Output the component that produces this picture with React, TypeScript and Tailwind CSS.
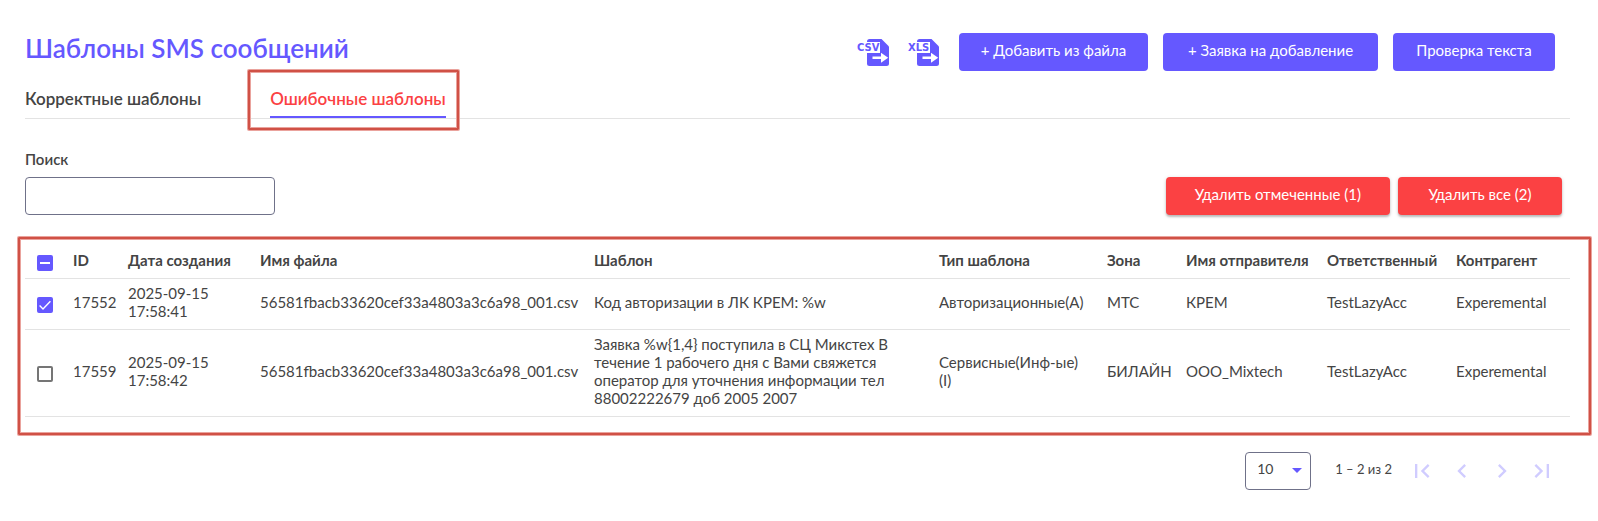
import { useState } from 'react'
import type { ReactNode } from 'react'

interface Template {
  id: number
  created: string
  file: string
  text: string
  type: string
  zone: string
  sender: string
  owner: string
  contractor: string
}

const TEMPLATES: Template[] = [
  {
    id: 17552,
    created: '2025-09-15 17:58:41',
    file: '56581fbacb33620cef33a4803a3c6a98_001.csv',
    text: 'Код авторизации в ЛК КРЕМ: %w',
    type: 'Авторизационные(A)',
    zone: 'МТС',
    sender: 'КРЕМ',
    owner: 'TestLazyAcc',
    contractor: 'Experemental',
  },
  {
    id: 17559,
    created: '2025-09-15 17:58:42',
    file: '56581fbacb33620cef33a4803a3c6a98_001.csv',
    text: 'Заявка %w{1,4} поступила в СЦ Микстех В течение 1 рабочего дня с Вами свяжется оператор для уточнения информации тел 88002222679 доб 2005 2007',
    type: 'Сервисные(Инф-ые) (I)',
    zone: 'БИЛАЙН',
    sender: 'ООО_Mixtech',
    owner: 'TestLazyAcc',
    contractor: 'Experemental',
  },
]

const COLUMNS = [
  { title: 'ID', width: 'w-[55px]' },
  { title: 'Дата создания', width: 'w-[132px]' },
  { title: 'Имя файла', width: 'w-[334px]' },
  { title: 'Шаблон', width: '' },
  { title: 'Тип шаблона', width: 'w-[168px]' },
  { title: 'Зона', width: 'w-[79px]' },
  { title: 'Имя отправителя', width: 'w-[141px]' },
  { title: 'Ответственный', width: 'w-[129px]' },
  { title: 'Контрагент', width: 'w-[124px]' },
]

const PAGER = [
  { label: 'Первая страница', d: 'M18.41 16.59L13.82 12l4.59-4.59L17 6l-6 6 6 6zM6 6h2v12H6z' },
  { label: 'Предыдущая страница', d: 'M15.41 7.41L14 6l-6 6 6 6 1.41-1.41L10.83 12z' },
  { label: 'Следующая страница', d: 'M10 6L8.59 7.41 13.17 12l-4.58 4.59L10 18l6-6z' },
  { label: 'Последняя страница', d: 'M5.59 7.41L10.18 12l-4.59 4.59L7 18l6-6-6-6zM16 6h2v12h-2z' },
]

function ExportButton({ format, textX }: { format: string; textX: number }) {
  return (
    <button type="button" aria-label={`Экспорт ${format}`} className="cursor-pointer">
      <svg width="32" height="28" viewBox="0 0 32 28" className="block">
        <path d="M12.5 0H24.5L32 7.5V24.5Q32 27 29.5 27H12.5Q10 27 10 24.5V2.5Q10 0 12.5 0Z" fill="#6558ff" />
        <path d="M8 3H23V14H8Z" fill="#fff" />
        <path d="M15.5 17.5H24V13.8L31.2 18.8L24 23.8V20.1H15.5Z" fill="#fff" />
        <text x={textX} y="12" fill="#6558ff" fontSize="10" fontWeight="700" fontFamily="DejaVu Sans, sans-serif">{format}</text>
      </svg>
    </button>
  )
}

function PrimaryButton({ width, children }: { width: string; children: ReactNode }) {
  return (
    <button type="button" className={`h-[38px] px-4 pb-1 rounded bg-[#6558ff] text-white whitespace-nowrap cursor-pointer hover:bg-[#5548ef] ${width}`}>
      {children}
    </button>
  )
}

function DangerButton({ children }: { children: ReactNode }) {
  return (
    <button type="button" className="h-[38px] min-w-[164px] px-[29px] pb-1 rounded bg-[#fb4143] text-white whitespace-nowrap shadow-[0_2px_2px_rgba(0,0,0,0.2),0_1px_4px_rgba(0,0,0,0.14)] cursor-pointer hover:bg-[#e93335]">
      {children}
    </button>
  )
}

function Checkbox({ label, checked, mixed, onChange }: { label: string; checked: boolean; mixed?: boolean; onChange: () => void }) {
  return (
    <span className="relative block size-4">
      <input
        type="checkbox"
        aria-label={label}
        checked={checked || !!mixed}
        onChange={onChange}
        className="block size-4 appearance-none rounded-xs border-2 border-[#757575] checked:border-[#6558ff] checked:bg-[#6558ff] cursor-pointer"
      />
      {(checked || mixed) && (
        <svg viewBox="0 0 16 16" className="absolute inset-0 size-4 pointer-events-none" fill="none" stroke="#fff">
          {mixed ? <path d="M3 8H13" strokeWidth="2" /> : <path d="M2.6 8.6L6 12L13.4 4.2" strokeWidth="1.4" />}
        </svg>
      )}
    </span>
  )
}

// red frame around the part of the page the reader should look at
function Highlight({ className }: { className: string }) {
  return (
    <span
      aria-hidden="true"
      className={`absolute pointer-events-none border-2 border-[#d05146] rounded-[1px] shadow-[0_0_0_1px_#eaa39d,inset_0_0_0_1px_#eaa39d] ${className}`}
    />
  )
}

export default function App() {
  const [selected, setSelected] = useState<number[]>([17552])
  const [search, setSearch] = useState('')
  const all = selected.length === TEMPLATES.length

  function toggle(id: number) {
    setSelected(s => (s.includes(id) ? s.filter(x => x !== id) : [...s, id]))
  }

  return (
    <main className="bg-white pl-[25px] pr-7 pt-[33px] pb-7 font-[Lato,'Open_Sans',sans-serif] text-[15px] leading-[18px] text-[#444]">
      {/* Title and actions */}
      <header className="flex items-start justify-between pr-[15px]">
        <h1 className="text-[26px] leading-[30px] font-semibold text-[#6558ff]">Шаблоны SMS сообщений</h1>
        <div className="flex items-center gap-[15px]">
          <div className="flex gap-[18px] pr-[5px] pt-0.5">
            <ExportButton format="CSV" textX={0} />
            <ExportButton format="XLS" textX={1} />
          </div>
          <PrimaryButton width="min-w-[189px]">+ Добавить из файла</PrimaryButton>
          <PrimaryButton width="min-w-[215px]">+ Заявка на добавление</PrimaryButton>
          <PrimaryButton width="min-w-[162px]">Проверка текста</PrimaryButton>
        </div>
      </header>

      {/* Tabs */}
      <nav className="flex gap-[69px] pt-[18px] border-b border-[#e3e3e3] text-[17px] leading-5 font-semibold">
        <a href="#correct" className="pb-[7px] border-b-2 border-transparent">Корректные шаблоны</a>
        <a href="#errors" className="relative pb-[7px] border-b-2 border-[#6558ff] text-[#fb4143]">
          Ошибочные шаблоны
          <Highlight className="-left-[22px] -right-[13px] -top-[19px] -bottom-[14px]" />
        </a>
      </nav>

      {/* Search and bulk delete */}
      <div className="flex items-end justify-between pt-[31px] pb-[29px] pr-2">
        <div className="flex flex-col gap-[9px]">
          <label htmlFor="search" className="font-semibold">Поиск</label>
          <input
            id="search"
            value={search}
            onChange={e => setSearch(e.target.value)}
            className="w-[250px] h-[38px] px-3 rounded border border-[#6f7189] outline-none focus:border-[#6558ff]"
          />
        </div>
        <div className="flex gap-2">
          <DangerButton>Удалить отмеченные ({selected.length})</DangerButton>
          <DangerButton>Удалить все ({TEMPLATES.length})</DangerButton>
        </div>
      </div>

      {/* Templates */}
      <section className="relative">
        <table className="w-full table-fixed border-separate border-spacing-0 text-left">
          <thead>
            <tr>
              <th className="w-[38px] h-[35px] pl-3 pt-1 border-b border-[#e3e3e3]">
                <Checkbox
                  label="Выбрать все"
                  checked={all}
                  mixed={selected.length > 0 && !all}
                  onChange={() => setSelected(all ? [] : TEMPLATES.map(t => t.id))}
                />
              </th>
              {COLUMNS.map(c => (
                <th key={c.title} className={`px-[10px] pb-0.5 border-b border-[#e3e3e3] font-bold whitespace-nowrap ${c.width}`}>{c.title}</th>
              ))}
            </tr>
          </thead>
          <tbody>
            {TEMPLATES.map(t => (
              <tr key={t.id} className="[&>td]:border-b [&>td]:border-[#e3e3e3] [&>td]:pt-[5px] [&>td]:pb-[9px] [&>td]:px-[10px]">
                <td className="pl-3! pt-[11px]!">
                  <Checkbox label={`Выбрать ${t.id}`} checked={selected.includes(t.id)} onChange={() => toggle(t.id)} />
                </td>
                <td>{t.id}</td>
                <td>{t.created}</td>
                <td className="whitespace-nowrap">{t.file}</td>
                <td><p className="max-w-[300px]">{t.text}</p></td>
                <td>{t.type}</td>
                <td>{t.zone}</td>
                <td>{t.sender}</td>
                <td>{t.owner}</td>
                <td>{t.contractor}</td>
              </tr>
            ))}
          </tbody>
        </table>
        <Highlight className="-left-[7px] -right-[21px] -top-[7px] -bottom-[18px]" />
      </section>

      {/* Pagination */}
      <footer className="flex items-center justify-end pt-[34px] pr-2 text-sm">
        <div className="relative">
          <select aria-label="Строк на странице" defaultValue="10" className="block w-[66px] h-[38px] pl-[11px] pb-1 rounded border border-[#6f7189] bg-white appearance-none cursor-pointer">
            <option>10</option>
            <option>25</option>
            <option>50</option>
          </select>
          <svg viewBox="0 0 10 5" className="absolute right-[9px] top-4 w-[10px] h-[5px] pointer-events-none">
            <path d="M0 0H10L5 5Z" fill="#6558ff" />
          </svg>
        </div>
        <span className="pl-6 pr-2.5 pb-1 text-[13px]">1 – 2 из 2</span>
        {PAGER.map(p => (
          <button key={p.label} type="button" disabled aria-label={p.label} className="flex items-center justify-center size-10">
            <svg viewBox="0 0 24 24" className="size-7" fill="#d0ccff"><path d={p.d} /></svg>
          </button>
        ))}
      </footer>
    </main>
  )
}
